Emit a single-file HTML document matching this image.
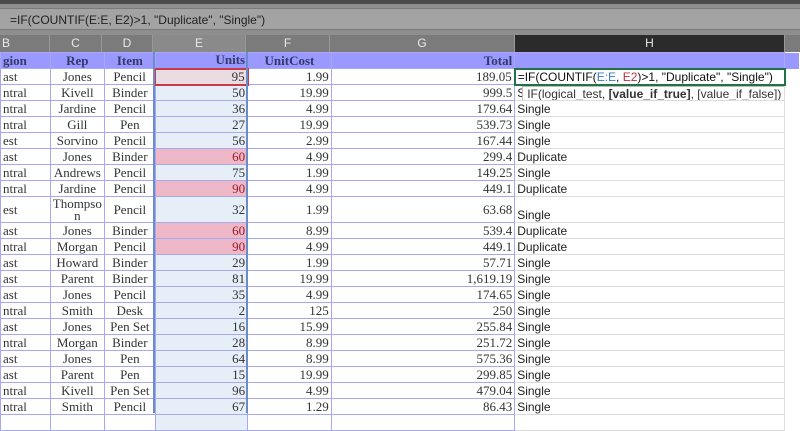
<!DOCTYPE html>
<html><head><style>
*{margin:0;padding:0;box-sizing:border-box}
body{width:800px;height:413px;overflow:hidden;background:#fff;position:relative;font-family:"Liberation Serif",serif}
#top{position:absolute;left:0;top:0;width:800px;height:4px;background:#4b4b4b}
#fb{position:absolute;left:0;top:4px;width:800px;height:31px;background:#8e8e8e}
#fbi{position:absolute;left:0;top:8px;width:800px;height:22px;background:#a3a3a3;border-top:1px solid #7a7a7a;border-bottom:1px solid #7a7a7a;font:12px "Liberation Sans",sans-serif;color:#222;padding:4px 0 0 10px}
#ch{position:absolute;left:0;top:35px;width:800px;height:17px;background:#7b7b7b}
.c{position:absolute;top:35px;height:17px;color:#e8e8e8;font:12px "Liberation Sans",sans-serif;text-align:center;line-height:17px;border-right:1px solid #999}
table{position:absolute;left:0;top:52px;border-collapse:collapse;table-layout:fixed;font-size:13px;color:#333}
td{border:1px solid #a8a8ee;height:16px;padding:0 2px;line-height:14px;overflow:hidden;white-space:nowrap}
tr.h td{background:#9999ff;font-weight:bold;color:#333a6a}
td.l{text-align:left}td.m{text-align:center}td.r{text-align:right}
td.e{background:#e6eef8}
td.p{background:#eeb8c8;color:#9b1a2a}
td.s{font:12px "Liberation Sans",sans-serif;color:#222;vertical-align:bottom;border-color:#dcdcdc;border-left:1px solid #a8a8ee}
td.x{border:none;background:#fff}
</style></head><body>
<div id="top"></div><div id="fb"></div>
<div id="fbi">=IF(COUNTIF(E:E, E2)&gt;1, "Duplicate", "Single")</div>
<div id="ch"></div>
<div class="c" style="left:0;width:50px;text-align:left;padding-left:2px">B</div>
<div class="c" style="left:50px;width:52px">C</div>
<div class="c" style="left:102px;width:51px">D</div>
<div class="c" style="left:153px;width:93px;background:#8a8a8a">E</div>
<div class="c" style="left:246px;width:84px">F</div>
<div class="c" style="left:330px;width:185px">G</div>
<div class="c" style="left:515px;width:270px;background:#2b2b2b">H</div>
<table>
<colgroup><col style="width:50px"><col style="width:52px"><col style="width:51px"><col style="width:93px"><col style="width:84px"><col style="width:185px"><col style="width:270px"><col style="width:15px"></colgroup>
<tr class="h"><td class="l">gion</td><td class="m">Rep</td><td class="m">Item</td><td class="r">Units</td><td class="m">UnitCost</td><td class="r">Total</td><td></td><td class="x"></td></tr>
<tr><td>ast</td><td class="m">Jones</td><td class="m">Pencil</td><td class="r" style="background:#e9dde2;border:2px solid #c83a4a">95</td><td class="r">1.99</td><td class="r">189.05</td><td class="s" style="border:2px solid #217346;vertical-align:middle;color:#111">=IF(COUNTIF(<span style="color:#3a78c8">E:E</span>, <span style="color:#c03040">E2</span>)&gt;1, "Duplicate", "Single")</td><td class="x"></td></tr>
<tr><td>ntral</td><td class="m">Kivell</td><td class="m">Binder</td><td class="r e">50</td><td class="r">19.99</td><td class="r">999.5</td><td class="s" style="position:relative">S<span style="position:absolute;left:7px;top:0;background:#fff;border:1px solid #bbb;padding:0 4px;box-shadow:1px 1px 2px #aaa;color:#333">IF(logical_test, <b>[value_if_true]</b>, [value_if_false])</span></td><td class="x"></td></tr>
<tr><td>ntral</td><td class="m">Jardine</td><td class="m">Pencil</td><td class="r e">36</td><td class="r">4.99</td><td class="r">179.64</td><td class="s">Single</td><td class="x"></td></tr>
<tr><td>ntral</td><td class="m">Gill</td><td class="m">Pen</td><td class="r e">27</td><td class="r">19.99</td><td class="r">539.73</td><td class="s">Single</td><td class="x"></td></tr>
<tr><td>est</td><td class="m">Sorvino</td><td class="m">Pencil</td><td class="r e">56</td><td class="r">2.99</td><td class="r">167.44</td><td class="s">Single</td><td class="x"></td></tr>
<tr><td>ast</td><td class="m">Jones</td><td class="m">Binder</td><td class="r p">60</td><td class="r">4.99</td><td class="r">299.4</td><td class="s">Duplicate</td><td class="x"></td></tr>
<tr><td>ntral</td><td class="m">Andrews</td><td class="m">Pencil</td><td class="r e">75</td><td class="r">1.99</td><td class="r">149.25</td><td class="s">Single</td><td class="x"></td></tr>
<tr><td>ntral</td><td class="m">Jardine</td><td class="m">Pencil</td><td class="r p">90</td><td class="r">4.99</td><td class="r">449.1</td><td class="s">Duplicate</td><td class="x"></td></tr>
<tr style="height:26px"><td>est</td><td class="m" style="white-space:normal;line-height:12px">Thompso<br>n</td><td class="m">Pencil</td><td class="r e">32</td><td class="r">1.99</td><td class="r">63.68</td><td class="s">Single</td><td class="x"></td></tr>
<tr><td>ast</td><td class="m">Jones</td><td class="m">Binder</td><td class="r p">60</td><td class="r">8.99</td><td class="r">539.4</td><td class="s">Duplicate</td><td class="x"></td></tr>
<tr><td>ntral</td><td class="m">Morgan</td><td class="m">Pencil</td><td class="r p">90</td><td class="r">4.99</td><td class="r">449.1</td><td class="s">Duplicate</td><td class="x"></td></tr>
<tr><td>ast</td><td class="m">Howard</td><td class="m">Binder</td><td class="r e">29</td><td class="r">1.99</td><td class="r">57.71</td><td class="s">Single</td><td class="x"></td></tr>
<tr><td>ast</td><td class="m">Parent</td><td class="m">Binder</td><td class="r e">81</td><td class="r">19.99</td><td class="r">1,619.19</td><td class="s">Single</td><td class="x"></td></tr>
<tr><td>ast</td><td class="m">Jones</td><td class="m">Pencil</td><td class="r e">35</td><td class="r">4.99</td><td class="r">174.65</td><td class="s">Single</td><td class="x"></td></tr>
<tr><td>ntral</td><td class="m">Smith</td><td class="m">Desk</td><td class="r e">2</td><td class="r">125</td><td class="r">250</td><td class="s">Single</td><td class="x"></td></tr>
<tr><td>ast</td><td class="m">Jones</td><td class="m">Pen Set</td><td class="r e">16</td><td class="r">15.99</td><td class="r">255.84</td><td class="s">Single</td><td class="x"></td></tr>
<tr><td>ntral</td><td class="m">Morgan</td><td class="m">Binder</td><td class="r e">28</td><td class="r">8.99</td><td class="r">251.72</td><td class="s">Single</td><td class="x"></td></tr>
<tr><td>ast</td><td class="m">Jones</td><td class="m">Pen</td><td class="r e">64</td><td class="r">8.99</td><td class="r">575.36</td><td class="s">Single</td><td class="x"></td></tr>
<tr><td>ast</td><td class="m">Parent</td><td class="m">Pen</td><td class="r e">15</td><td class="r">19.99</td><td class="r">299.85</td><td class="s">Single</td><td class="x"></td></tr>
<tr><td>ntral</td><td class="m">Kivell</td><td class="m">Pen Set</td><td class="r e">96</td><td class="r">4.99</td><td class="r">479.04</td><td class="s">Single</td><td class="x"></td></tr>
<tr><td>ntral</td><td class="m">Smith</td><td class="m">Pencil</td><td class="r e">67</td><td class="r">1.29</td><td class="r">86.43</td><td class="s">Single</td><td class="x"></td></tr>
<tr><td>&nbsp;</td><td></td><td></td><td class="e"></td><td></td><td></td><td class="s"></td><td class="x"></td></tr>
</table>
<div style="position:absolute;left:153px;top:52px;width:2px;height:361px;background:#6a8cc8"></div>
<div style="position:absolute;left:246px;top:52px;width:2px;height:361px;background:#6a8cc8"></div>
</body></html>
